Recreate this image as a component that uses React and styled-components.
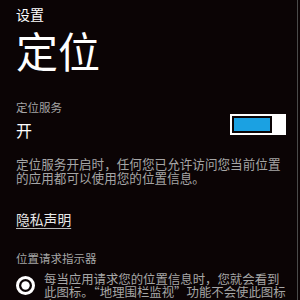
import React from 'react';
import styled, { createGlobalStyle } from 'styled-components';

const GlobalStyle = createGlobalStyle`
    html, body {
        margin: 0;
        padding: 0;
        background: #0b0405;
    }
    body {
        font-family: "Noto Sans CJK SC", "Noto Sans", sans-serif;
    }
`

const Screen = styled.div`
    width: 298px;
    height: 300px;
    overflow: hidden;
    background: #0b0405;
    border-right: 1px solid #4a4a4a;
    padding: 0 0 0 16px;
    box-sizing: border-box;
    color: #fff;
`
const AppTitle = styled.div`
    font-size: 14px;
    line-height: 14px;
    margin-top: 7px;
    color: #fff;
`
const PageTitle = styled.div`
    font-size: 42px;
    line-height: 42px;
    margin-top: 8px;
    color: #fff;
`
const Label = styled.div`
    font-size: 11.5px;
    line-height: 12px;
    color: #a6a6a6;
    margin-top: ${props => props.top}px;
`
const ToggleRow = styled.div`
    display: flex;
    align-items: flex-start;
    justify-content: space-between;
    padding-right: 11px;
    margin-top: 1px;
`
const Value = styled.div`
    font-size: 16px;
    line-height: 16px;
    margin-top: 8px;
    color: #fff;
`
const Switch = styled.div`
    display: flex;
    align-items: stretch;
    height: 21px;
`
const Track = styled.div`
    width: 44px;
    box-sizing: border-box;
    border: 2px solid #fff;
    padding: 2px;
    display: flex;
`
const Fill = styled.div`
    flex: 1;
    background: #1ba1e2;
`
const Thumb = styled.div`
    width: 12px;
    background: #fff;
`
const Description = styled.p`
    margin: 19px 16px 0 0;
    font-size: 12.6px;
    line-height: 14px;
    color: #a6a6a6;
`
const Link = styled.a`
    display: block;
    width: fit-content;
    margin-top: 26px;
    font-size: 13.8px;
    line-height: 16px;
    color: #e8e8e8;
    text-decoration: underline;
    text-underline-offset: 3px;
    text-decoration-color: #bbb;
`
const IndicatorRow = styled.div`
    display: flex;
    align-items: flex-start;
    gap: 9px;
    margin-top: 9px;
`
const RingIcon = styled.div`
    flex: none;
    margin-top: 3px;
    width: 19px;
    height: 19px;
`
const IndicatorText = styled.p`
    margin: 0 8px 0 0;
    font-size: 12.4px;
    line-height: 13px;
    color: #a6a6a6;
`

const LocationIcon = () => (
    <RingIcon>
        <svg width="19" height="19" viewBox="0 0 19 19">
            <circle cx="9.5" cy="9.5" r="8" fill="none" stroke="#fff" strokeWidth="3" />
            <circle cx="9.5" cy="9.5" r="4.2" fill="#fff" />
        </svg>
    </RingIcon>
)

const App = () => {
    return (
        <>
            <GlobalStyle />
            <Screen>
                <AppTitle>设置</AppTitle>
                <PageTitle>定位</PageTitle>
                <Label top={30}>定位服务</Label>
                <ToggleRow>
                    <Value>开</Value>
                    <Switch>
                        <Track><Fill /></Track>
                        <Thumb />
                    </Switch>
                </ToggleRow>
                <Description>
                    定位服务开启时，任何您已允许访问您当前位置的应用都可以使用您的位置信息。
                </Description>
                <Link>隐私声明</Link>
                <Label top={25}>位置请求指示器</Label>
                <IndicatorRow>
                    <LocationIcon />
                    <IndicatorText>
                        每当应用请求您的位置信息时，您就会看到此图标。“地理围栏监视”功能不会使此图标出现。
                    </IndicatorText>
                </IndicatorRow>
            </Screen>
        </>
    )
};

export default App;
